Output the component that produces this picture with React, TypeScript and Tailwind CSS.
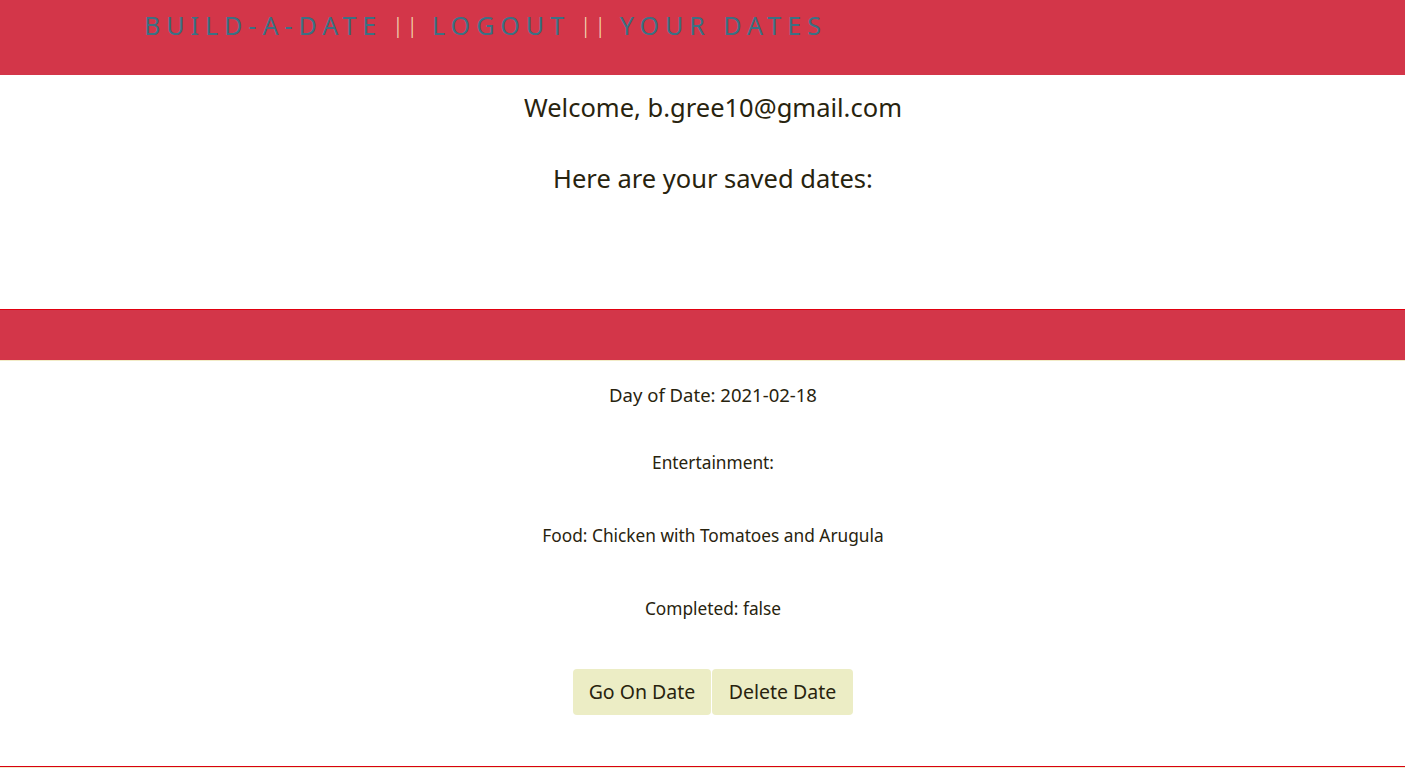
export default function App() {
  const date = {
    day: "2021-02-18",
    entertainment: "",
    food: "Chicken with Tomatoes and Arugula",
    completed: false,
  };

  const Sep = () => (
    <span className="ml-[10px] mr-[14px] inline-flex gap-[3px] text-[21px] font-light tracking-normal text-[#f3e0b8]">
      <span>|</span>
      <span>|</span>
    </span>
  );

  return (
    <div className="min-h-[771px] bg-white font-['Noto_Sans',sans-serif] text-[#28230e]">
      {/* Nav */}
      <nav className="h-[75px] bg-[#d33649]">
        <div className="flex items-center pl-[144px] pt-[8px] text-[25px] leading-[34px] tracking-[6px] text-[#3b7184] uppercase">
          <span>Build-a-Date</span>
          <Sep />
          <span>Logout</span>
          <Sep />
          <span>Your Dates</span>
        </div>
      </nav>

      <div className="pl-[21px]">
        {/* Welcome */}
        <div className="flex h-[234px] flex-col items-center text-[25.5px]">
          <p className="mt-[15px] leading-[34px]">Welcome, b.gree10@gmail.com</p>
          <p className="mt-[37px] leading-[34px]">Here are your saved dates:</p>
        </div>
      </div>

      <div className="h-[51px] border-t border-[#e00010] bg-[#d33649]" />
      <div className="h-[1px] bg-[#f2ecc8]" />

      {/* Date card */}
      <div className="flex h-[406px] flex-col items-center border-b border-[#d80010] pl-[21px] text-center">
        <p className="mt-[22px] text-[18.5px] leading-[24px]">Day of Date: {date.day}</p>
        <p className="mt-[45px] text-[17.3px] leading-[22px]">Entertainment: {date.entertainment}</p>
        <p className="mt-[51px] text-[17.3px] leading-[22px]">Food: {date.food}</p>
        <p className="mt-[51px] text-[17.3px] leading-[22px]">Completed: {String(date.completed)}</p>
        <div className="mt-[49px] flex">
          <button className="h-[46px] w-[138px] rounded-[4px] bg-[#ecedc5] text-[19.5px] text-[#28230e]">
            Go On Date
          </button>
          <button className="ml-[1px] h-[46px] w-[141px] rounded-[4px] bg-[#ecedc5] text-[19.5px] text-[#28230e]">
            Delete Date
          </button>
        </div>
      </div>
      <div className="h-[1px] bg-[#f2ecc8]" />
    </div>
  );
}
